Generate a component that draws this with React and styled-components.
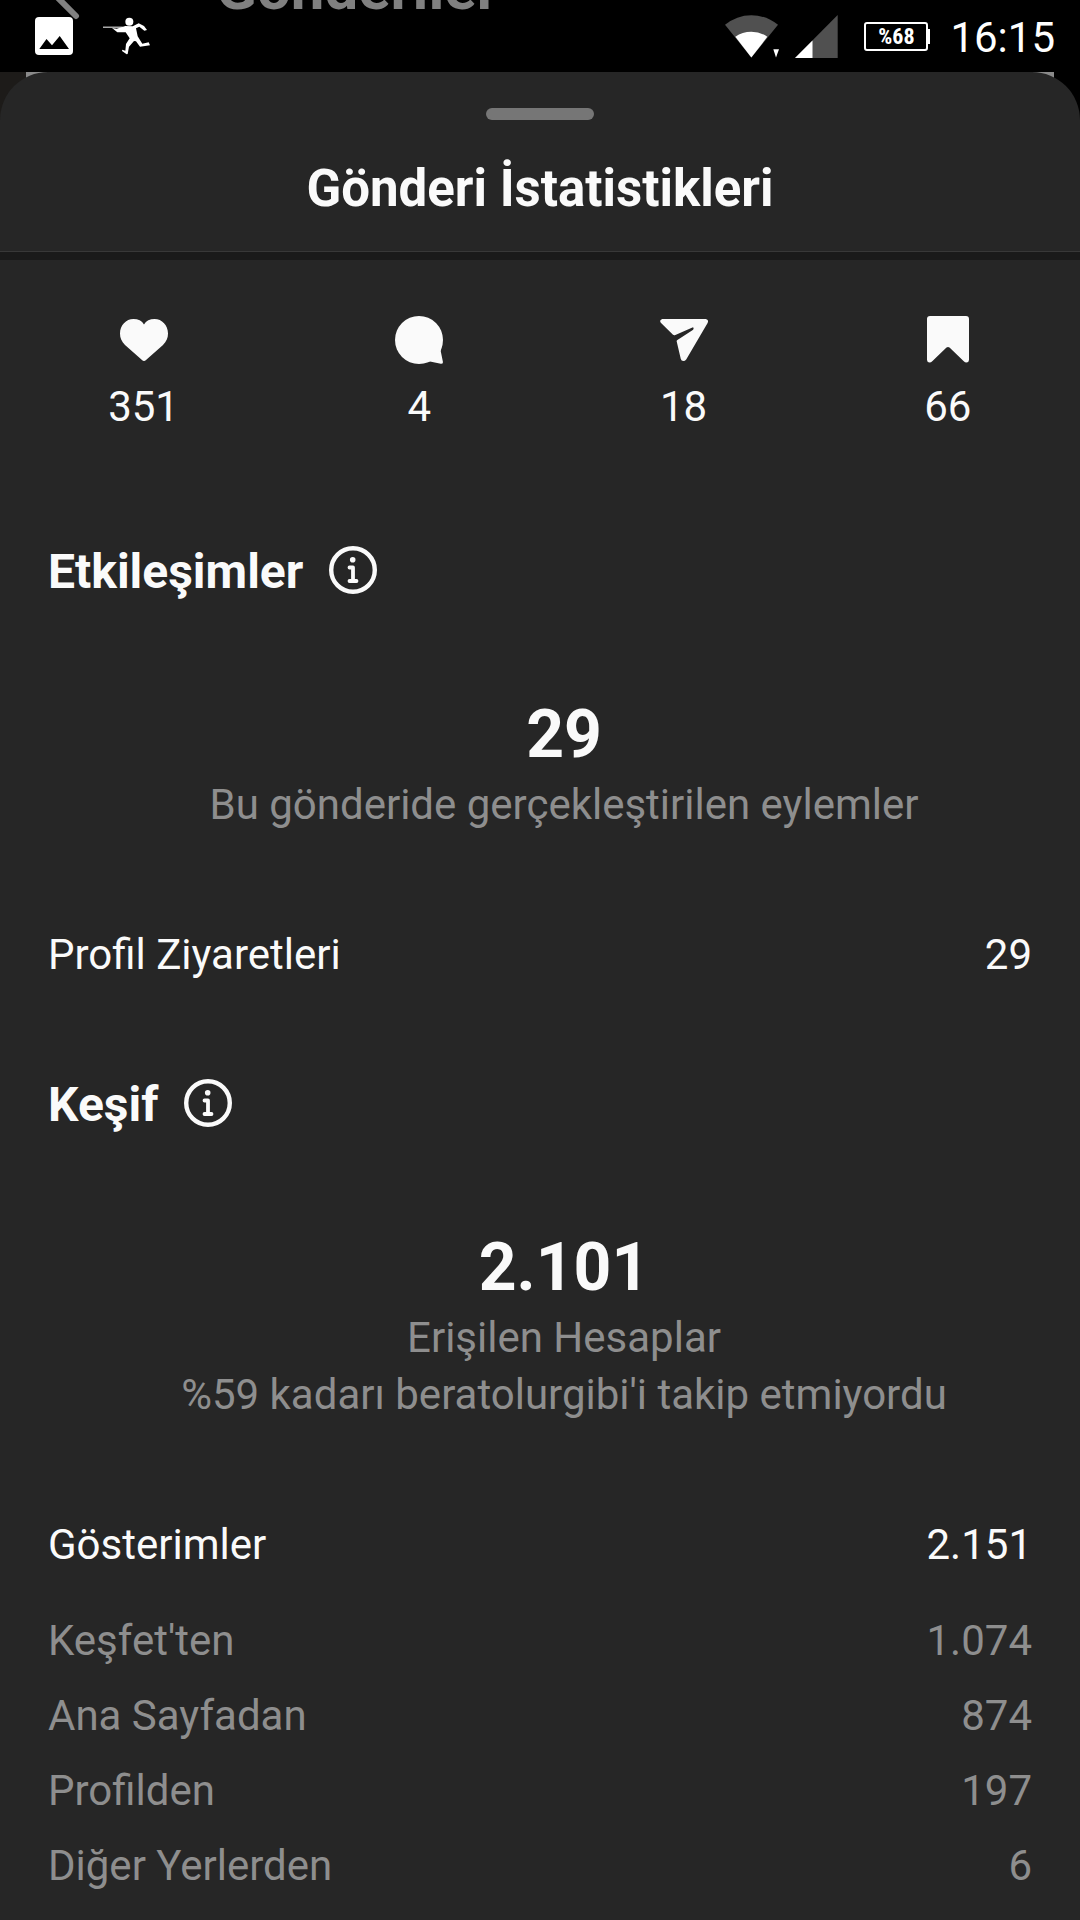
import React from "react";
import { createGlobalStyle, styled } from "styled-components";

const GlobalStyle = createGlobalStyle`
    :root{
        --sheetColor: #262626;
        --textColor: #fafafa;
        --mutedColor: #8e8e8e;
    }
    *{
        box-sizing: border-box;
        margin: 0;
        padding: 0;
    }
    body{
        background: var(--sheetColor);
        color: var(--textColor);
        font-family: Roboto, "Noto Sans", sans-serif;
        font-size: 42px;
        line-height: 57px;
    }
`

const StatusBarStyled = styled.header`
    position: relative;
    display: flex;
    align-items: center;
    justify-content: space-between;
    height: 72px;
    padding: 0 25px 0 35px;
    overflow: hidden;
    background: #000;
    svg{
        display: block;
    }
`
const StatusGroup = styled.div`
    position: relative;
    display: flex;
    align-items: center;
    gap: ${({ $gap }) => $gap}px;
`
/* page under the sheet, still visible through the status bar */
const PageBehind = styled.div`
    position: absolute;
    top: -46px;
    left: 50px;
    display: flex;
    gap: 136px;
    color: #808080;
    font-size: 60px;
    font-weight: 700;
    line-height: 70px;
`
const Battery = styled.div`
    position: relative;
    width: 64px;
    height: 29px;
    margin: 0 -4px 0 10px;
    border: 2px solid #fff;
    border-radius: 3px;
    color: #fff;
    font-family: "Roboto Condensed", "Liberation Sans Narrow", Roboto, sans-serif;
    font-size: 22px;
    font-weight: 700;
    line-height: 26px;
    text-align: center;
    &::after{
        content: "";
        position: absolute;
        top: 5px;
        right: -4px;
        width: 2px;
        height: 15px;
        background: #fff;
    }
`
const Clock = styled.time`
    margin-left: 10px;
    padding-top: 3px;
    color: #fff;
`
const Backdrop = styled.div`
    background: linear-gradient(90deg, #1d1b19 0 26px, #8a8a8a 26px calc(100% - 26px), #000 calc(100% - 26px));
`
const Sheet = styled.main`
    padding-bottom: 26px;
    border-radius: 48px 48px 0 0;
    background: var(--sheetColor);
`
const SheetHeader = styled.div`
    display: flex;
    flex-direction: column;
    align-items: center;
    gap: 39px;
    padding: 36px 48px 32px;
`
const Handle = styled.div`
    width: 108px;
    height: 12px;
    border-radius: 6px;
    background: #767676;
`
const Title = styled.h1`
    font-size: 51px;
    line-height: 60px;
`
const Divider = styled.hr`
    height: 9px;
    border: 0;
    border-top: 1px solid #383838;
    background: #1a1a1a;
`
const Metrics = styled.ul`
    display: flex;
    justify-content: space-around;
    padding: 56px 0 111px;
    list-style: none;
    li{
        display: flex;
        flex-direction: column;
        align-items: center;
        gap: 14px;
    }
`
const Section = styled.section`
    padding: 0 48px;
    & + &{
        padding-top: 96px;
    }
`
const SectionTitle = styled.div`
    display: flex;
    align-items: flex-start;
    gap: 26px;
    h2{
        font-size: 48px;
        line-height: 52px;
    }
    button{
        border: 0;
        background: none;
        color: inherit;
    }
    svg{
        display: block;
    }
`
const Summary = styled.div`
    padding: 96px 0 93px 48px;
    color: var(--mutedColor);
    text-align: center;
    strong{
        display: block;
        padding-top: 2px;
        margin-bottom: 2px;
        color: var(--textColor);
        font-size: 66px;
        line-height: 78px;
    }
`
const Rows = styled.dl`
    display: flex;
    flex-direction: column;
    gap: 18px;
    margin-top: ${({ $muted }) => ($muted ? "39px" : "0")};
    color: ${({ $muted }) => ($muted ? "var(--mutedColor)" : "var(--textColor)")};
    div{
        display: flex;
        justify-content: space-between;
    }
`

const Icon = ({ children }) => (
    <svg width="48" height="48" viewBox="0 0 48 48" fill="currentColor" aria-hidden="true">
        {children}
    </svg>
)

const HeartIcon = () => (
    <Icon>
        <path d="M24 45c-.8 0-1.4-.4-2-1L5 29C1.5 25.5 0 22 0 17.600C0 9.200 6 3 13.500 3 18 3 22 4.800 24 8.400 26 4.800 30 3 34.500 3 42 3 48 9.200 48 17.600 48 22 46.500 25.500 43 29L26 44c-.6.6-1.200 1-2 1z" />
    </Icon>
)
const CommentIcon = () => (
    <Icon>
        <circle cx="24" cy="24" r="24" />
        <path d="M30 46L35 45.400 45.800 47.800Q48.200 48 47.900 45.800L45.700 35 46.500 30z" />
    </Icon>
)
const SendIcon = () => (
    <Icon>
        <path d="M2.200 3H45.800Q49 3.600 47.600 7L26.200 43.500Q25 45 23.300 45 21.300 44.800 20.800 43L16.700 25.500Q16.500 24.500 17.400 23.900L32.800 14Q34.300 12.600 33 11.300L14.800 19.200Q13.800 19.500 13 18.800L.8 6.800Q-1 4.200 2.200 3z" />
    </Icon>
)
const BookmarkIcon = () => (
    <Icon>
        <path d="M6 0H42Q45 0 45 3V44Q44.700 46.500 42.500 46.500 41 46.500 39.500 45L25.500 31.600Q24 30.400 22.500 31.600L8.500 45Q7 46.500 5.500 46.500 3.300 46.500 3 44V3Q3 0 6 0z" />
    </Icon>
)
const InfoIcon = () => (
    <Icon>
        <circle cx="24" cy="24" r="21.800" fill="none" stroke="currentColor" strokeWidth="4.400" />
        <circle cx="23.700" cy="13.800" r="2.800" />
        <path d="M20.500 21.500H24V35M20.500 35H27.500" fill="none" stroke="currentColor" strokeWidth="3.800" strokeLinecap="round" strokeLinejoin="round" />
    </Icon>
)

const StatusBar = () => (
    <StatusBarStyled>
        <PageBehind aria-hidden="true">
            <svg width="30" height="70" viewBox="0 0 30 70" fill="none" stroke="currentColor" strokeWidth="6" strokeLinecap="round">
                <path d="M0 36L26 62" />
            </svg>
            <span>Gönderiler</span>
        </PageBehind>
        <StatusGroup $gap={30}>
            <svg width="38" height="38" viewBox="0 0 38 38">
                <rect width="38" height="38" rx="4" fill="#fff" />
                <path d="M4.300 32L11.500 22 17 28.300 24.700 19 34 32z" fill="#000" />
            </svg>
            <svg width="47" height="38" viewBox="309 52 141 114" fill="#fff">
                <circle cx="388" cy="66" r="12" />
                <path d="M309 81H368V84H309z" />
                <path d="M336 85L350 87 376 79 398 80 416 71 432 79 441 91 433 93 418 81 408 86 413 110 427 132 446 128 450 137 420 141 408 125 402 124 387 141 383 163 380 164 366 154 367 150 376 153 378 133 389 116 377 98 352 98z" />
            </svg>
        </StatusGroup>
        <StatusGroup $gap={16}>
            <svg width="54" height="43" viewBox="75 43 162 128">
                <path d="M154 170L75 72Q110 43 154 43T234 72z" fill="#505050" />
                <path d="M154 170L106 108Q127 93 154 93T202 108z" fill="#fff" />
                <path d="M220 145H237L228 170z" fill="#fff" />
            </svg>
            <svg width="43" height="43" viewBox="286 43 128 128">
                <path d="M286 171L413 43V171z" fill="#505050" />
                <path d="M286 171L338 119V171z" fill="#fff" />
            </svg>
            <Battery>%68</Battery>
            <Clock>16:15</Clock>
        </StatusGroup>
    </StatusBarStyled>
)

const StatRows = ({ items, muted }) => (
    <Rows $muted={muted}>
        {items.map(([label, value]) => (
            <div key={label}>
                <dt>{label}</dt>
                <dd>{value}</dd>
            </div>
        ))}
    </Rows>
)

const metrics = [
    { Glyph: HeartIcon, value: "351" },
    { Glyph: CommentIcon, value: "4" },
    { Glyph: SendIcon, value: "18" },
    { Glyph: BookmarkIcon, value: "66" },
]

const sources = [
    ["Keşfet'ten", "1.074"],
    ["Ana Sayfadan", "874"],
    ["Profilden", "197"],
    ["Diğer Yerlerden", "6"],
]

const App = () => {
    return(
        <>
        <GlobalStyle/>
        <StatusBar/>
        <Backdrop>
            <Sheet>
                <SheetHeader>
                    <Handle/>
                    <Title>Gönderi İstatistikleri</Title>
                </SheetHeader>
                <Divider/>
                <Metrics>
                    {metrics.map(({ Glyph, value }) => (
                        <li key={value}>
                            <Glyph/>
                            <span>{value}</span>
                        </li>
                    ))}
                </Metrics>
                <Section>
                    <SectionTitle>
                        <h2>Etkileşimler</h2>
                        <button type="button" aria-label="Etkileşimler hakkında"><InfoIcon/></button>
                    </SectionTitle>
                    <Summary>
                        <strong>29</strong>
                        <p>Bu gönderide gerçekleştirilen eylemler</p>
                    </Summary>
                    <StatRows items={[["Profil Ziyaretleri", "29"]]}/>
                </Section>
                <Section>
                    <SectionTitle>
                        <h2>Keşif</h2>
                        <button type="button" aria-label="Keşif hakkında"><InfoIcon/></button>
                    </SectionTitle>
                    <Summary>
                        <strong>2.101</strong>
                        <p>Erişilen Hesaplar</p>
                        <p>%59 kadarı beratolurgibi'i takip etmiyordu</p>
                    </Summary>
                    <StatRows items={[["Gösterimler", "2.151"]]}/>
                    <StatRows items={sources} muted/>
                </Section>
            </Sheet>
        </Backdrop>
        </>
    )
}

export default App;
